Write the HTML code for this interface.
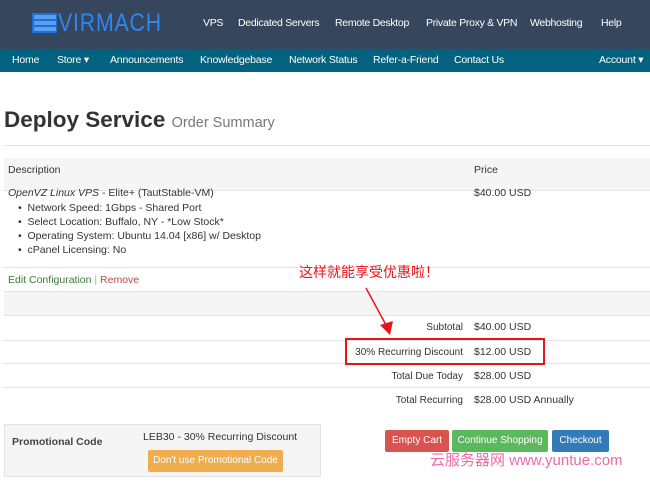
<!DOCTYPE html>
<html><head><meta charset="utf-8"><style>
*{margin:0;padding:0;box-sizing:border-box}
body{width:650px;height:486px;overflow:hidden;background:#fff;font-family:"Liberation Sans","Noto Sans CJK SC",sans-serif;position:relative;color:#333}
.a{position:absolute;white-space:nowrap}
.top{position:absolute;left:0;top:0;width:650px;height:49px;background:#36465c}
.nav{position:absolute;left:0;top:49px;width:650px;height:23px;background:#02627f}
.t1{color:#fff;font-size:10.5px;top:17px;letter-spacing:-0.3px}
.t2{color:#fff;font-size:10.5px;top:54px;letter-spacing:-0.2px}
.ln{position:absolute;left:4px;width:646px;height:1px;background:#e4e4e4}
.f{font-size:10.5px;color:#333}
.s{font-size:10px;color:#333}
.btn{position:absolute;top:430px;height:22px;color:#fff;font-size:10px;line-height:22px;text-align:center;border-radius:2px}
</style></head><body>
<div class="top"></div>
<div class="a" style="left:32px;top:13px;width:25px;height:20px;background:#1f6fd6"></div>
<div class="a" style="left:34px;top:15px;width:22px;height:4px;background:#5aa0f0"></div>
<div class="a" style="left:34px;top:21px;width:22px;height:4px;background:#5aa0f0"></div>
<div class="a" style="left:34px;top:27px;width:22px;height:4px;background:#5aa0f0"></div>
<div class="a" style="left:58px;top:9px;font-size:25px;color:#2f86ee;letter-spacing:1px;transform:scaleX(.85);transform-origin:left">VIRMACH</div>
<div class="a t1" style="left:203px">VPS</div>
<div class="a t1" style="left:238px">Dedicated Servers</div>
<div class="a t1" style="left:335px">Remote Desktop</div>
<div class="a t1" style="left:426px">Private Proxy &amp; VPN</div>
<div class="a t1" style="left:530px">Webhosting</div>
<div class="a t1" style="left:601px">Help</div>
<div class="nav"></div>
<div class="a t2" style="left:12px">Home</div>
<div class="a t2" style="left:57px">Store ▾</div>
<div class="a t2" style="left:110px">Announcements</div>
<div class="a t2" style="left:200px">Knowledgebase</div>
<div class="a t2" style="left:289px">Network Status</div>
<div class="a t2" style="left:373px">Refer-a-Friend</div>
<div class="a t2" style="left:454px">Contact Us</div>
<div class="a t2" style="left:599px">Account ▾</div>
<div class="a" style="left:4px;top:107px;font-size:22.5px;font-weight:bold;color:#333">Deploy Service <span style="font-size:14.5px;font-weight:normal;color:#777">Order Summary</span></div>
<div class="ln" style="top:145px"></div>
<div class="a" style="left:4px;top:158px;width:646px;height:32px;background:#f5f5f5"></div>
<div class="ln" style="top:190px"></div>
<div class="a f" style="left:8px;top:164px">Description</div>
<div class="a f" style="left:474px;top:164px">Price</div>
<div class="a f" style="left:8px;top:187px"><i>OpenVZ Linux VPS</i> - Elite+ (TautStable-VM)</div>
<div class="a f" style="left:474px;top:187px">$40.00 USD</div>
<div class="a f" style="left:18px;top:201px;line-height:14px">• &nbsp;Network Speed: 1Gbps - Shared Port<br>• &nbsp;Select Location: Buffalo, NY - *Low Stock*<br>• &nbsp;Operating System: Ubuntu 14.04 [x86] w/ Desktop<br>• &nbsp;cPanel Licensing: No</div>
<div class="ln" style="top:267px"></div>
<div class="a f" style="left:8px;top:274px"><span style="color:#3c7a3c">Edit Configuration</span> <span style="color:#aaa">|</span> <span style="color:#b94a48">Remove</span></div>
<div class="a" style="left:4px;top:291px;width:646px;height:24px;background:#f5f5f5;border-top:1px solid #e4e4e4"></div>
<div class="ln" style="top:315px"></div>
<div class="ln" style="top:340px"></div>
<div class="ln" style="top:363px"></div>
<div class="ln" style="top:387px"></div>
<div class="a s" style="right:187px;top:322px">Subtotal</div>
<div class="a f" style="left:474px;top:321px">$40.00 USD</div>
<div class="a s" style="right:187px;top:347px">30% Recurring Discount</div>
<div class="a f" style="left:474px;top:346px">$12.00 USD</div>
<div class="a s" style="right:187px;top:371px">Total Due Today</div>
<div class="a f" style="left:474px;top:370px">$28.00 USD</div>
<div class="a s" style="right:187px;top:395px">Total Recurring</div>
<div class="a f" style="left:474px;top:394px">$28.00 USD Annually</div>
<div class="a" style="left:345px;top:338px;width:200px;height:27px;border:2px solid #e8141b"></div>
<div class="a" style="left:299px;top:262px;font-size:14px;color:#e8141b">这样就能享受优惠啦！</div>
<svg class="a" style="left:360px;top:285px" width="40" height="55"><line x1="6" y1="3" x2="26" y2="40" stroke="#e8141b" stroke-width="1.5"/><polygon points="20,40 33,36 30,50" fill="#e8141b"/></svg>
<div class="a" style="left:4px;top:424px;width:317px;height:53px;background:#f5f5f5;border:1px solid #e3e3e3"></div>
<div class="a f" style="left:12px;top:436px;font-weight:bold;color:#444">Promotional Code</div>
<div class="a f" style="left:143px;top:431px">LEB30 - 30% Recurring Discount</div>
<div class="a" style="left:148px;top:450px;width:135px;height:22px;background:#f0ad4e;border-radius:2px;color:#fff;font-size:10px;line-height:22px;text-align:center">Don't use Promotional Code</div>
<div class="btn" style="left:385px;width:64px;background:#d9534f">Empty Cart</div>
<div class="btn" style="left:452px;width:96px;background:#5cb85c">Continue Shopping</div>
<div class="btn" style="left:552px;width:57px;background:#337ab7">Checkout</div>
<div class="a" style="left:430px;top:449px;font-size:15px;color:#f06aa8">云服务器网 www.yuntue.com</div>
</body></html>
